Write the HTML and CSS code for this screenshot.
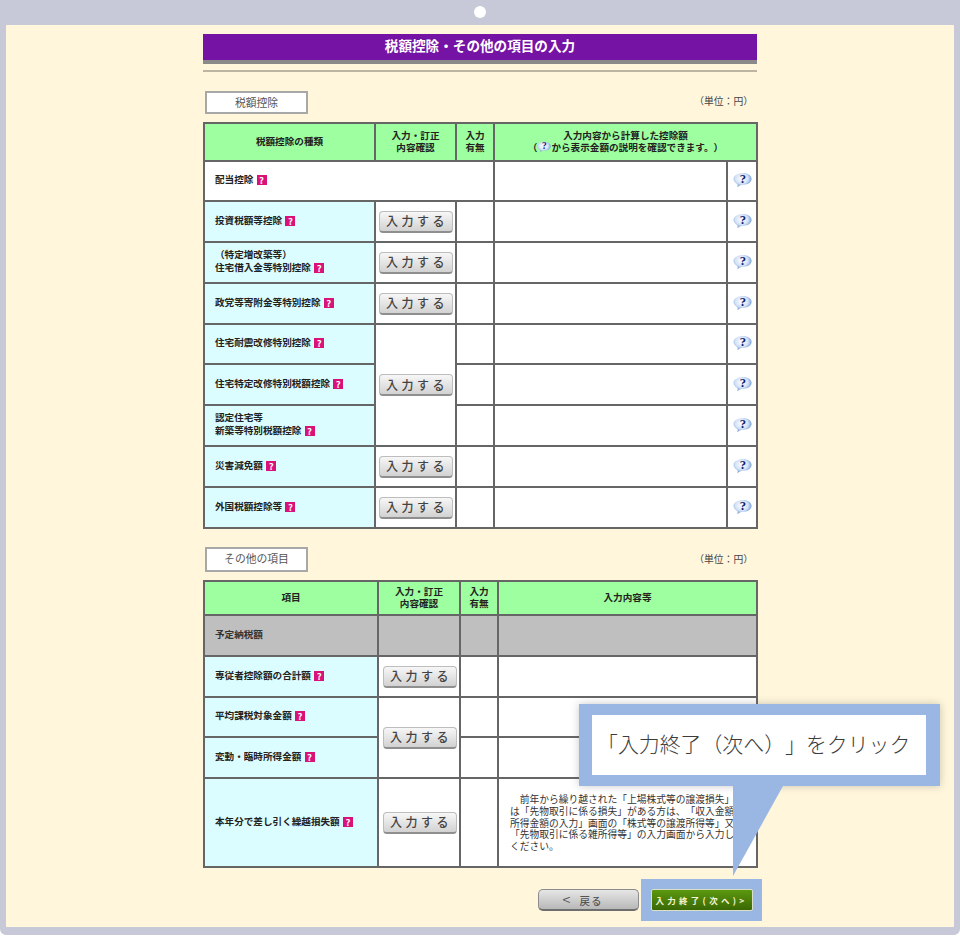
FILE: index.html
```html
<!DOCTYPE html>
<html lang="ja">
<head>
<meta charset="utf-8">
<title>税額控除・その他の項目の入力</title>
<link rel="stylesheet" href="styles.css">
</head>
<body>
<svg class="defs" width="0" height="0" aria-hidden="true">
  <defs>
    <radialGradient id="bubble-fill" cx="0.45" cy="0.4" r="0.65">
      <stop offset="0" stop-color="#ffffff"/>
      <stop offset="0.55" stop-color="#d2e2f8"/>
      <stop offset="1" stop-color="#4f7fc4"/>
    </radialGradient>
    <symbol id="bubble" viewBox="0 0 18 15">
      <path d="M9.500 .8C14 .8 17.600 3.200 17.600 6.400S14.500 12 10 12C8 12 6.500 12.300 4 14.300C4.800 12.800 4.600 11.800 3.600 11C1.800 10 .5 8.300.5 6.400.5 3.200 5 .8 9.500 .8Z" fill="url(#bubble-fill)"/>
      <text x="9.300" y="10.500" text-anchor="middle" class="bubble-mark">?</text>
    </symbol>
  </defs>
</svg>
<div class="frame">
  <span class="hole"></span>
  <main class="page">
    <h1 class="title">税額控除・その他の項目の入力</h1>
    <div class="rule"></div>

    <div class="section-head">
      <div class="section-label">税額控除</div>
      <div class="unit">（単位：円）</div>
    </div>
    <table class="grid grid-a">
      <colgroup><col class="a1"><col class="a2"><col class="a3"><col class="a4"><col class="a5"></colgroup>
      <tr class="head-a">
        <th>税額控除の種類</th>
        <th>入力・訂正<br>内容確認</th>
        <th>入力<br>有無</th>
        <th colspan="2">入力内容から計算した控除額<br>（<svg class="bubble-sm"><use href="#bubble"/></svg>から表示金額の説明を確認できます。）</th>
      </tr>
      <tr class="row-short">
        <td colspan="3" class="plain">配当控除 <span class="q">?</span></td>
        <td></td>
        <td class="help"><svg class="bubble"><use href="#bubble"/></svg></td>
      </tr>
      <tr class="row">
        <td class="name">投資税額等控除 <span class="q">?</span></td>
        <td class="act"><button class="enter">入力する</button></td><td></td><td></td>
        <td class="help"><svg class="bubble"><use href="#bubble"/></svg></td>
      </tr>
      <tr class="row">
        <td class="name">（特定増改築等）<br>住宅借入金等特別控除 <span class="q">?</span></td>
        <td class="act"><button class="enter">入力する</button></td><td></td><td></td>
        <td class="help"><svg class="bubble"><use href="#bubble"/></svg></td>
      </tr>
      <tr class="row">
        <td class="name">政党等寄附金等特別控除 <span class="q">?</span></td>
        <td class="act"><button class="enter">入力する</button></td><td></td><td></td>
        <td class="help"><svg class="bubble"><use href="#bubble"/></svg></td>
      </tr>
      <tr class="row-short">
        <td class="name">住宅耐震改修特別控除 <span class="q">?</span></td>
        <td class="act" rowspan="3"><button class="enter">入力する</button></td><td></td><td></td>
        <td class="help"><svg class="bubble"><use href="#bubble"/></svg></td>
      </tr>
      <tr class="row">
        <td class="name">住宅特定改修特別税額控除 <span class="q">?</span></td>
        <td></td><td></td>
        <td class="help"><svg class="bubble"><use href="#bubble"/></svg></td>
      </tr>
      <tr class="row">
        <td class="name">認定住宅等<br>新築等特別税額控除 <span class="q">?</span></td>
        <td></td><td></td>
        <td class="help"><svg class="bubble"><use href="#bubble"/></svg></td>
      </tr>
      <tr class="row">
        <td class="name">災害減免額 <span class="q">?</span></td>
        <td class="act"><button class="enter">入力する</button></td><td></td><td></td>
        <td class="help"><svg class="bubble"><use href="#bubble"/></svg></td>
      </tr>
      <tr class="row">
        <td class="name">外国税額控除等 <span class="q">?</span></td>
        <td class="act"><button class="enter">入力する</button></td><td></td><td></td>
        <td class="help"><svg class="bubble"><use href="#bubble"/></svg></td>
      </tr>
    </table>

    <div class="section-head section-head-2">
      <div class="section-label">その他の項目</div>
      <div class="unit">（単位：円）</div>
    </div>
    <table class="grid grid-b">
      <colgroup><col class="b1"><col class="b2"><col class="b3"><col class="b4"></colgroup>
      <tr class="head-b">
        <th>項目</th>
        <th>入力・訂正<br>内容確認</th>
        <th>入力<br>有無</th>
        <th>入力内容等</th>
      </tr>
      <tr class="row disabled">
        <td class="label-off">予定納税額</td><td></td><td></td><td></td>
      </tr>
      <tr class="row">
        <td class="name">専従者控除額の合計額 <span class="q">?</span></td>
        <td class="act"><button class="enter">入力する</button></td><td></td><td></td>
      </tr>
      <tr class="row-short">
        <td class="name">平均課税対象金額 <span class="q">?</span></td>
        <td class="act" rowspan="2"><button class="enter">入力する</button></td><td></td><td></td>
      </tr>
      <tr class="row">
        <td class="name">変動・臨時所得金額 <span class="q">?</span></td>
        <td></td><td></td>
      </tr>
      <tr class="row-tall">
        <td class="name">本年分で差し引く繰越損失額 <span class="q">?</span></td>
        <td class="act"><button class="enter">入力する</button></td><td></td>
        <td class="note">前年から繰り越された「上場株式等の譲渡損失」又は「先物取引に係る損失」がある方は、「収入金額・所得金額の入力」画面の「株式等の譲渡所得等」又は「先物取引に係る雑所得等」の入力画面から入力してください。</td>
      </tr>
    </table>

    <div class="nav">
      <button class="back"><span class="back-arrow">&lt;</span>戻る</button>
      <span class="next-wrap"><button class="next">入力終了(次へ)&gt;</button></span>
    </div>
  </main>

  <aside class="callout">
    <svg class="tail" viewBox="0 0 50 90" aria-hidden="true"><polygon points="0,0 50,0 0,90"/></svg>
    <div class="callout-text">「入力終了（次へ）」をクリック</div>
  </aside>
</div>
</body>
</html>
```
FILE: styles.css
```css
* { box-sizing: border-box; }
html, body { margin: 0; padding: 0; background: #fff; }
body {
  width: 960px;
  height: 936px;
  overflow: hidden;
  font-family: "Noto Sans CJK JP", "Liberation Sans", sans-serif;
  text-spacing-trim: space-all;
}
.defs { position: absolute; }
.frame {
  position: relative;
  height: 935px;
  background: #fff6dc;
  border-style: solid;
  border-color: #c8c9d8;
  border-width: 25px 6px 8px 6px;
  border-radius: 0 0 6px 6px;
}
.hole {
  position: absolute;
  top: -19px;
  left: 468px;
  width: 12px;
  height: 12px;
  border-radius: 50%;
  background: #fff;
}
.page {
  width: 554px;
  margin: 0 auto;
  padding-top: 9px;
}
.title {
  margin: 0;
  height: 30px;
  padding-bottom: 4px;
  background: #7514a4;
  border-bottom: 4px solid #8a8a8a;
  color: #fff;
  font-size: 13.600px;
  font-weight: 700;
  line-height: 23px;
  text-align: center;
}
.rule {
  height: 2px;
  margin-top: 6px;
  background: #bcb5a2;
}
.section-head {
  display: flex;
  justify-content: space-between;
  height: 23px;
  margin: 19px 0 8px;
  padding: 0 4px 0 2px;
}
.section-head-2 { margin: 18px 0 8px; height: 25px; }
.section-label {
  width: 103px;
  height: 100%;
  border: 2px solid #a8a8a8;
  background: #fff;
  color: #555;
  font-size: 10.800px;
  line-height: 19px;
  text-align: center;
}
.unit { color: #444; font-size: 9.800px; line-height: 20px; }
.section-head-2 .unit { line-height: 24px; }
.grid {
  width: 553px;
  table-layout: fixed;
  border-collapse: collapse;
  background: #fff;
  border: 2px solid #666;
  font-size: 9.600px;
  line-height: 13px;
  color: #222;
}
.grid th, .grid td {
  border: 2px solid #666;
  padding: 0;
}
.grid th {
  padding-bottom: 2px;
  background: #9dff9f;
  font-weight: 700;
  line-height: 12px;
  text-align: center;
}
.a1 { width: 171px; } .a2 { width: 81px; } .a3 { width: 38px; } .a4 { width: 233px; } .a5 { width: 30px; }
.b1 { width: 174px; } .b2 { width: 82px; } .b3 { width: 38px; } .b4 { width: 259px; }
.head-a { height: 38px; }
.head-b { height: 34px; }
.row { height: 41px; }
.row-short { height: 40px; }
.row-tall { height: 89px; }
.name, .plain, .label-off { padding: 0 0 3px 10px !important; font-weight: 700; }
.name { background: #dcfdff; }
.disabled td { background: #bfbfbf; }
.label-off { color: #333; }
.act { text-align: center; }
.help { text-align: center; }
.note {
  padding: 2px 9px 0 11px !important;
  color: #333;
  font-size: 9.750px;
  line-height: 11.700px;
  text-indent: 1em;
}
.q {
  display: inline-block;
  width: 10px;
  height: 10px;
  margin-left: 1px;
  background: #d9127a;
  color: #fff;
  font-size: 9.500px;
  font-weight: 700;
  line-height: 10px;
  text-align: center;
  vertical-align: -1px;
}
.bubble { display: block; width: 19px; height: 16px; margin: 0 auto 2px; }
.bubble-sm { width: 14px; height: 12px; vertical-align: -2px; }
.bubble-mark {
  fill: #10206e;
  font-family: "Liberation Serif", serif;
  font-size: 12px;
  font-weight: 700;
}
.enter {
  display: inline-block;
  width: 74px;
  height: 22px;
  padding: 0 0 0 3px;
  border: 1px solid #bdbdbd;
  border-bottom: 2px solid #8f8f8f;
  border-radius: 4px;
  background: linear-gradient(#f7f7f7, #d2d2d2);
  color: #444;
  font-family: inherit;
  font-size: 12px;
  font-weight: 500;
  letter-spacing: 3.500px;
  line-height: 18px;
  vertical-align: middle;
}
.grid-b .enter { margin-left: 1px; }
.nav {
  display: flex;
  justify-content: flex-end;
  align-items: center;
  height: 42px;
  margin-top: 11px;
  margin-right: -5px;
  gap: 2px;
}
.back {
  width: 101px;
  height: 22px;
  padding: 0 12px 0 0;
  border: 1px solid #8c8c8c;
  border-bottom: 2px solid #6e6e6e;
  border-radius: 5px;
  background: linear-gradient(#e6e6e6, #b8b8b8);
  color: #555;
  font-family: inherit;
  font-size: 10.500px;
  font-weight: 500;
  letter-spacing: 1px;
  line-height: 18px;
}
.back-arrow { margin-right: 8px; font-size: 14px; font-weight: 400; }
.next-wrap {
  display: flex;
  align-items: center;
  justify-content: center;
  width: 121px;
  height: 42px;
  background: #9ab6e2;
}
.next {
  width: 102px;
  height: 22px;
  padding: 0;
  border: 1px solid #d8e0c8;
  border-radius: 2px;
  background: linear-gradient(#5c980f, #3a6804);
  color: #f4f6d8;
  font-family: inherit;
  font-size: 8.500px;
  font-weight: 700;
  letter-spacing: 3.300px;
  line-height: 18px;
}
.callout {
  position: absolute;
  left: 573px;
  top: 679px;
  width: 361px;
  height: 82px;
  padding: 11px 14px 11px 13px;
  background: #9ab6e2;
  box-shadow: 0 0 8px rgba(80, 80, 80, .3);
}
.tail {
  position: absolute;
  left: 154px;
  top: 82px;
  width: 50px;
  height: 90px;
  fill: #9ab6e2;
}
.callout-text {
  height: 60px;
  padding-left: 5px;
  background: #fff;
  color: #3c3c3c;
  font-family: "Noto Sans CJK JP", sans-serif;
  font-size: 20.900px;
  font-weight: 300;
  line-height: 57px;
  text-align: left;
  white-space: nowrap;
}
```
